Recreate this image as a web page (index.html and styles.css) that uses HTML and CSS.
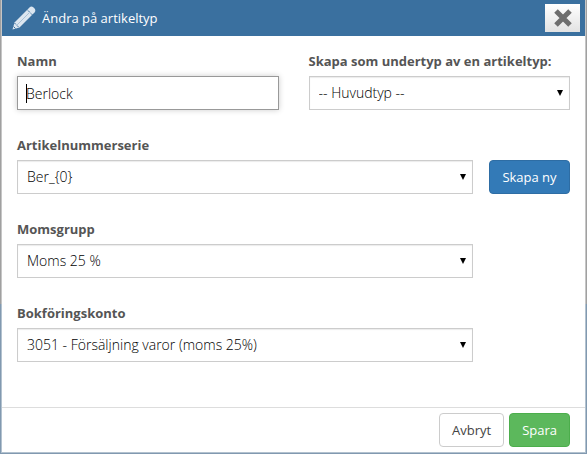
FILE: index.html
```html
<!DOCTYPE html>
<html lang="sv">
<head>
    <meta charset="UTF-8">
    <meta name="viewport" content="width=device-width, initial-scale=1.0">
    <title>Ändra på artikeltyp</title>
    <link rel="stylesheet" href="styles.css">
</head>
<body>

    <form class="modal">
        <!-- Header -->
        <div class="modal-header">
            <svg class="pencil-icon" width="24" height="24" viewBox="0 0 24 24" aria-hidden="true">
                <path fill="#dbe6f0" d="M0.500 23.500 L2.500 16.500 L17.500 1.500 Q19 0 21 1 L23 3 Q24 5 22.500 6.500 L7.500 21.500 Z"/>
                <path stroke="#3a709f" stroke-width="1" stroke-dasharray="1.500 0.700" fill="none" d="M15 3.500 L20.500 9 M2.500 17 L7 21.500"/>
                <path stroke="#a9c1d6" stroke-width="1" fill="none" d="M5 19 L17 7"/>
                <path stroke="#3a709f" stroke-width="1" fill="none" d="M1.500 20.500 L3.500 22.500"/>
            </svg>
            <h1 class="modal-title">Ändra på artikeltyp</h1>
            <button type="button" class="close-btn" aria-label="Stäng">
                <svg width="18" height="18" viewBox="0 0 18 18" aria-hidden="true">
                    <path fill="none" stroke="#6e6e6e" stroke-width="5" d="M2 2 L16 16 M16 2 L2 16"/>
                </svg>
            </button>
        </div>

        <!-- Body -->
        <div class="modal-body">
            <div class="row row-half">
                <div class="form-group">
                    <label for="name">Namn</label>
                    <div class="text-box">
                        <input type="text" id="name" class="form-control active" value="Berlock">
                        <span class="caret"></span>
                    </div>
                </div>
                <div class="form-group">
                    <label for="parent">Skapa som undertyp av en artikeltyp:</label>
                    <div class="select-box">
                        <select id="parent" class="form-control">
                            <option>-- Huvudtyp --</option>
                        </select>
                    </div>
                </div>
            </div>
            <div class="row">
                <div class="form-group">
                    <label for="series">Artikelnummerserie</label>
                    <div class="select-box">
                        <select id="series" class="form-control">
                            <option>Ber_{0}</option>
                        </select>
                    </div>
                </div>
                <button type="button" class="btn btn-primary">Skapa ny</button>
            </div>
            <div class="row">
                <div class="form-group">
                    <label for="vat">Momsgrupp</label>
                    <div class="select-box">
                        <select id="vat" class="form-control">
                            <option>Moms 25 %</option>
                        </select>
                    </div>
                </div>
            </div>
            <div class="row">
                <div class="form-group">
                    <label for="account">Bokföringskonto</label>
                    <div class="select-box">
                        <select id="account" class="form-control">
                            <option>3051 - Försäljning varor (moms 25%)</option>
                        </select>
                    </div>
                </div>
            </div>
        </div>

        <!-- Footer -->
        <div class="modal-footer">
            <button type="button" class="btn btn-default">Avbryt</button>
            <button type="submit" class="btn btn-success">Spara</button>
        </div>
    </form>

</body>
</html>
```
FILE: styles.css
```css
* {
    box-sizing: border-box;
}
body {
    margin: 0;
    padding: 0 1px 1px;
    background: linear-gradient(#a0a0a0 304px, #8199b0 304px);
    font-family: "Open Sans", "Noto Sans", sans-serif;
    font-size: 13px;
    line-height: 20px;
    color: #555;
}
.modal {
    border: 1px solid rgba(255, 255, 255, 0.4);
    border-top: none;
    background-color: white;
    background-clip: padding-box;
}

/* Header */
.modal-header {
    display: flex;
    align-items: center;
    height: 36px;
    padding: 0 5px 0 10px;
    background-color: #3a709f;
    color: white;
}
.modal-title {
    flex: 1;
    margin: 0 0 0 6px;
    font-size: 13px;
    font-weight: normal;
}
.close-btn {
    display: flex;
    align-items: center;
    justify-content: center;
    width: 35px;
    height: 28px;
    padding: 0;
    border: none;
    background: linear-gradient(#fff, #e2e2e2);
    cursor: pointer;
}

/* Body */
.modal-body {
    display: flex;
    flex-direction: column;
    gap: 25px;
    padding: 15px 15px 45px;
}
.row {
    display: grid;
    grid-template-columns: 1fr 81px;
    gap: 16px;
    align-items: end;
}
.row-half {
    grid-template-columns: 1fr 1fr;
    gap: 30px;
}
label {
    display: block;
    margin-bottom: 5px;
    font-weight: bold;
}
.text-box,
.select-box {
    position: relative;
}
.form-control {
    display: block;
    width: 100%;
    height: 34px;
    padding: 0 9px;
    border: 1px solid #ccc;
    border-radius: 0;
    background-color: white;
    font: inherit;
    font-size: 14px;
    font-weight: 300;
    color: black;
    outline: none;
    appearance: none;
    box-shadow: inset 0 1px 1px rgba(0, 0, 0, 0.08);
}
.form-control.active {
    padding: 0 8px;
    border-color: #999;
    box-shadow: 0 0 6px rgba(0, 0, 0, 0.2);
}
.caret {
    position: absolute;
    top: 8px;
    left: 9px;
    width: 1px;
    height: 19px;
    background-color: black;
}
.select-box::after {
    content: "";
    position: absolute;
    top: 14px;
    right: 7px;
    border: 3px solid transparent;
    border-top: 6px solid black;
    border-bottom: none;
    pointer-events: none;
}

/* Buttons */
.btn {
    height: 34px;
    padding: 0 12px;
    border: 1px solid transparent;
    border-radius: 4px;
    font: inherit;
    color: white;
    white-space: nowrap;
    cursor: pointer;
}
.btn-primary {
    background-color: #337ab7;
    border-color: #2e6da4;
}
.btn-default {
    background-color: white;
    border-color: #ccc;
    color: #444;
}
.btn-success {
    background-color: #5cb85c;
    border-color: #4cae4c;
}

/* Footer */
.modal-footer {
    display: flex;
    justify-content: flex-end;
    gap: 5px;
    padding: 5px 15px;
    border-top: 1px solid #ddd;
}
```
